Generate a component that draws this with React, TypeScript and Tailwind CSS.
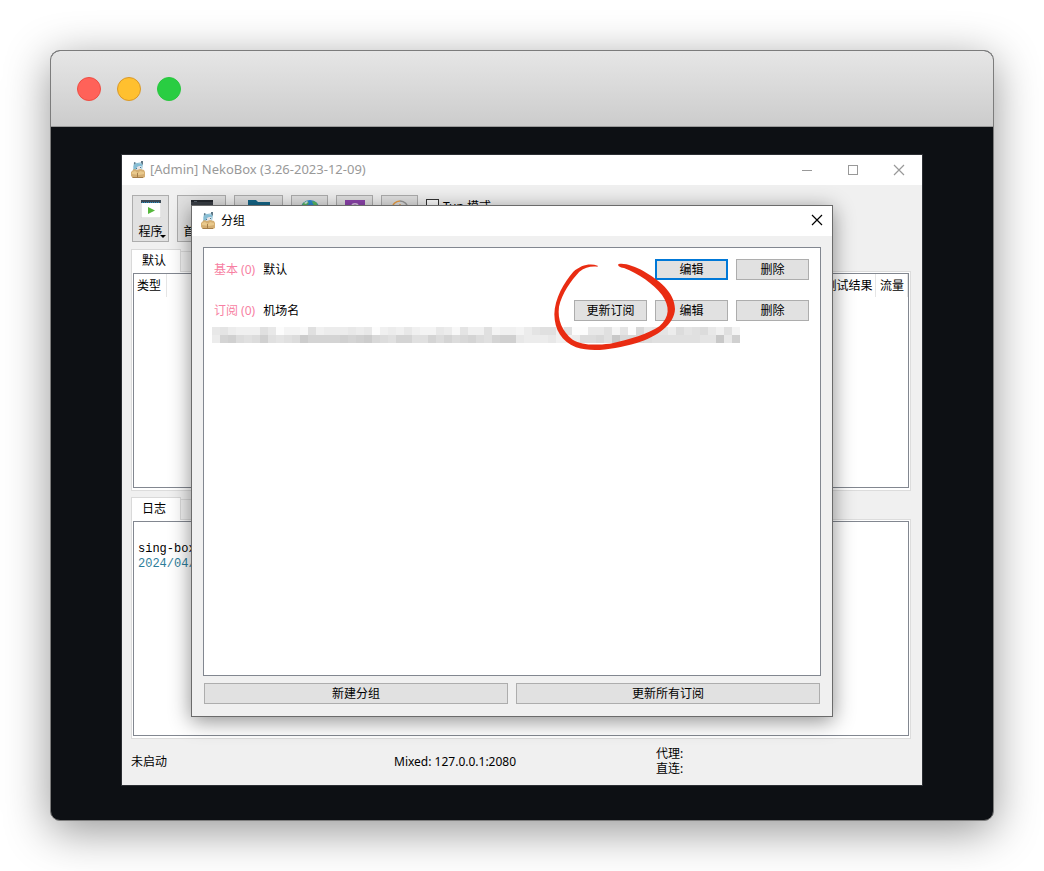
import type { ReactNode } from "react";
import clsx from "clsx";

const uiFont = "font-['Noto_Sans','Noto_Sans_CJK_SC',sans-serif]";

// One hex digit per block, from mid grey (0) to almost white (f)
const maskedUrl = [
  "a9bccc8afdde8cbbbabafcbcacddabe9cc8dccdb988c8ffaa8d9f6a99b7987ac8d",
  "b5478748987355554543678558857576578544abbbaccb776826667888888992a4",
];

const NekoIcon = () => (
  <svg width="16" height="18" viewBox="0 0 16 18" aria-hidden="true">
    <path d="M4 1l3 1 4-1 2 0 0 4-1 4H5L3 6z" fill="#b4d6e4" />
    <path d="M4 1l2 1-2 2zM11 0h2v4l-2-2z" fill="#5f7786" />
    <path d="M6 5h5v4H6z" fill="#e4e2e4" />
    <path d="M4 4l3-2 5 1v2L9 5 7 6 6 9H3z" fill="#86bdd4" />
    <path d="M6 7h1v1H6zM10 6h1v1h-1z" fill="#46748f" />
    <path d="M1 11l3-3 3 1 3-1 4 1 1 2v5l-2 1H3l-2-2z" fill="#d4ae72" />
    <path d="M2 11l3-1 3 2 2-2 4 1v2l-5 1-7-1z" fill="#e9c98c" />
    <path d="M2 16l5 0 6 0v1H3zM7 12h1v4H7z" fill="#a37c49" />
  </svg>
);

const ProgramIcon = () => (
  <svg width="20" height="18" viewBox="0 0 20 18" aria-hidden="true">
    <path d="M0 0h20v18H0z" fill="#fff" stroke="#ccc" />
    <path d="M0 0h20v3H0z" fill="#3d4a56" />
    <path d="M1 2.500h18" stroke="#2c8fc4" strokeDasharray="1 1" />
    <path d="M7 7l7 3.500L7 14z" fill="#56b83c" />
  </svg>
);

const PreferencesIcon = () => (
  <svg width="22" height="22" viewBox="0 0 22 22" aria-hidden="true">
    <path d="M0 0h22v22H0z" fill="#3a3f46" />
    <path d="M0 0h22v2H0z" fill="#25292f" />
    <path d="M3 1.500h3" stroke="#58616b" />
  </svg>
);

const FolderIcon = () => (
  <svg width="22" height="20" viewBox="0 0 22 20" aria-hidden="true">
    <path d="M0 0h8l2 2h12v18H0z" fill="#16688a" />
    <path d="M2 5h20v15H2z" fill="#2286a8" />
  </svg>
);

const GlobeIcon = () => (
  <svg width="20" height="20" viewBox="0 0 20 20" aria-hidden="true">
    <circle cx="10" cy="10" r="10" fill="#2d8bd2" />
    <path d="M3 3l4-2 2 2-2 2-4 2-2 2zM12 1l4 1 3 5-4-1-2-2z" fill="#5dbb63" />
    <path d="M4 3l3-2 1 1-2 2z" fill="#d5eef0" />
  </svg>
);

const UpdateIcon = () => (
  <svg width="20" height="20" viewBox="0 0 20 20" aria-hidden="true">
    <path d="M0 0h20v20H0z" fill="#8e44ad" />
    <path d="M7 6c0-3 6-3 6 0s-3 2-3 5" fill="none" stroke="#dcc4e6" strokeWidth="1.500" />
  </svg>
);

const GaugeIcon = () => (
  <svg width="18" height="18" viewBox="0 0 18 18" aria-hidden="true">
    <path d="M1 9a8 8 0 0 1 8-8" fill="none" stroke="#eda045" strokeWidth="1.500" />
    <path d="M9 1a8 8 0 1 1-8 8" fill="none" stroke="#999" strokeWidth="1.500" />
    <path d="M8 4h2v6H8z" fill="#e0b27c" />
  </svg>
);

const CloseIcon = () => (
  <svg width="12" height="12" viewBox="0 0 12 12" aria-hidden="true">
    <path d="M1 1l10 10M11 1L1 11" fill="none" stroke="currentColor" strokeWidth="1.200" />
  </svg>
);

const MarkerCircle = () => (
  <svg
    className="pointer-events-none absolute -left-[22px] -top-10 z-10 max-w-none"
    width="126"
    height="94"
    viewBox="36 45 378 282"
    aria-hidden="true"
  >
    <path
      d="M173 62C150 53 122 60 100 80C72 112 44 160 43 208C44 255 64 288 108 307C160 324 225 312 290 294C350 276 404 238 405 192C404 140 355 104 310 78C285 65 250 52 235 58C232 62 240 68 252 69C295 86 340 116 366 150C390 185 390 215 358 244C325 266 270 284 210 296C160 301 125 300 98 284C66 258 52 225 57 185C66 145 92 108 118 80C136 66 152 63 173 65Z"
      fill="#e92c12"
    />
  </svg>
);

interface ButtonProps {
  children: ReactNode;
  className?: string;
  focused?: boolean;
}

const PushButton = ({ children, className, focused }: ButtonProps) => (
  <button
    type="button"
    className={clsx(
      "flex h-[21px] items-center justify-center bg-[#e1e1e1] leading-4 text-black",
      focused ? "border-2 border-[#0078d7]" : "border border-[#adadad]",
      className
    )}
  >
    {children}
  </button>
);

const toolbar = [
  { name: "程序", icon: ProgramIcon, label: "程序", wide: false },
  { name: "首选项", icon: PreferencesIcon, label: "首选项", wide: true },
  { name: "服务器", icon: FolderIcon, wide: true },
  { name: "浏览器", icon: GlobeIcon, wide: false },
  { name: "更新", icon: UpdateIcon, wide: false },
  { name: "流量", icon: GaugeIcon, wide: false },
];

const Toolbar = () => (
  <div className="flex items-start gap-2 pl-[1px]">
    {toolbar.map((item) => (
      <button
        key={item.name}
        type="button"
        aria-label={item.name}
        className={clsx(
          "relative flex h-[47px] flex-col items-center justify-between border border-[#adadad] bg-[#e1e1e1] pb-[1px] pt-1",
          item.wide ? "w-[49px]" : "w-[37px]"
        )}
      >
        <item.icon />
        {item.label && <span className="leading-4">{item.label}</span>}
        {item.name === "程序" && (
          <span className="absolute bottom-[3px] right-[2px] border-x-[3px] border-t-[3px] border-x-transparent border-t-black" />
        )}
      </button>
    ))}
    <label className="mt-1 flex items-start gap-1 leading-[15px]">
      <input
        type="checkbox"
        className="size-[13px] appearance-none border border-[#333] bg-white"
      />
      <span>Tun 模式</span>
    </label>
  </div>
);

interface TabPaneProps {
  label: string;
  nextLabel: string;
  children: ReactNode;
}

const TabPane = ({ label, nextLabel, children }: TabPaneProps) => (
  <section className="flex flex-1 flex-col">
    <div role="tablist" className="flex h-[22px] items-end">
      <button
        type="button"
        role="tab"
        aria-selected="true"
        className="relative z-[1] -mb-[1px] h-[23px] w-[50px] border border-b-0 border-[#d9d9d9] bg-white pr-1"
      >
        {label}
      </button>
      <button
        type="button"
        role="tab"
        aria-selected="false"
        aria-label={nextLabel}
        className="h-5 w-[49px] border border-b-0 border-l-0 border-[#d9d9d9] bg-[#f0f0f0]"
      />
    </div>
    <div className="flex flex-1 border border-[#dcdcdc] bg-white p-[1px] pb-[2px]">
      <div className="flex-1 border border-[#828790] bg-white">{children}</div>
    </div>
  </section>
);

const groups = [
  { kind: "基本 (0)", name: "默认", subscription: false },
  { kind: "订阅 (0)", name: "机场名", subscription: true },
];

const GroupDialog = () => (
  <div
    role="dialog"
    aria-label="分组"
    className="absolute bottom-[68px] left-[69px] right-[89px] top-[50px] z-10 flex flex-col border border-[#6b6b6b] bg-[#f0f0f0] shadow-[0_4px_20px_rgba(0,0,0,0.45)]"
  >
    <header className="flex h-[30px] shrink-0 items-center bg-white pl-2">
      <NekoIcon />
      <h2 className="ml-[5px] flex-1">分组</h2>
      <button type="button" aria-label="关闭" className="flex h-full w-[31px] items-center justify-center pb-[2px]">
        <CloseIcon />
      </button>
    </header>
    <div className="flex flex-1 flex-col px-[11px] pb-3 pt-[11px]">
      <ul className="flex flex-1 flex-col gap-5 border border-[#828790] bg-white pl-2 pr-[11px] pt-[11px]">
        {groups.map((group) => (
          <li key={group.name}>
            <div className="flex items-center gap-2">
              <div className="flex flex-1 gap-2 pl-[2px]">
                <span className="text-[#f77fa3]">{group.kind}</span>
                <span>{group.name}</span>
              </div>
              {group.subscription && (
                <div className="relative">
                  <PushButton className="w-[73px]">更新订阅</PushButton>
                  <MarkerCircle />
                </div>
              )}
              <PushButton className="w-[73px]" focused={!group.subscription}>
                编辑
              </PushButton>
              <PushButton className="w-[73px]">删除</PushButton>
            </div>
            {group.subscription && (
              <div className="mt-[6px]">
                {maskedUrl.map((row) => (
                  <div key={row} className="flex">
                    {row.split("").map((digit, index) => {
                      const shade = 192 + parseInt(digit, 16) * 4;
                      return (
                        <span
                          key={index}
                          className="size-2"
                          style={{ backgroundColor: `rgb(${shade}, ${shade}, ${shade})` }}
                        />
                      );
                    })}
                  </div>
                ))}
              </div>
            )}
          </li>
        ))}
      </ul>
      <div className="mt-[7px] flex gap-2 px-[1px]">
        <PushButton className="flex-1">新建分组</PushButton>
        <PushButton className="flex-1">更新所有订阅</PushButton>
      </div>
    </div>
  </div>
);

const MainWindow = () => (
  <main className="relative flex flex-1 flex-col border border-[#2b2e33] bg-[#f0f0f0]">
    {/* Title bar */}
    <header className="flex h-[30px] shrink-0 items-center bg-white pl-2 text-[#999]">
      <NekoIcon />
      <h1 className="ml-1 flex-1 text-[13px]">[Admin] NekoBox (3.26-2023-12-09)</h1>
      <button type="button" aria-label="最小化" className="flex h-full w-[46px] items-center justify-center">
        <span className="h-[1px] w-[10px] bg-[#999]" />
      </button>
      <button type="button" aria-label="最大化" className="flex h-full w-[46px] items-center justify-center">
        <span className="size-[10px] border border-[#999]" />
      </button>
      <button type="button" aria-label="关闭" className="flex h-full w-[46px] items-center justify-center">
        <CloseIcon />
      </button>
    </header>

    <div className="flex flex-1 flex-col pl-[9px] pr-[11px] pt-[10px]">
      <Toolbar />
      <div className="mt-[7px] flex flex-1 flex-col gap-[6px]">
        <TabPane label="默认" nextLabel="机场名">
          <table className="w-full table-fixed">
            <thead>
              <tr className="h-[23px] text-left">
                <th className="w-8 border-r border-[#e5e5e5] pl-[3px] font-normal">类型</th>
                <th />
                <th className="w-[51px] border-r border-[#e5e5e5] font-normal">测试结果</th>
                <th className="w-8 border-r border-[#e5e5e5] pl-1 font-normal">流量</th>
              </tr>
            </thead>
          </table>
        </TabPane>
        <TabPane label="日志" nextLabel="连接">
          <div className="px-1 pt-5 font-['Liberation_Mono',monospace] leading-[15px]">
            <p>sing-box</p>
            <p className="text-[#2d7d9a]">2024/04/</p>
          </div>
        </TabPane>
      </div>
    </div>

    {/* Status bar */}
    <footer className="grid h-[46px] shrink-0 grid-cols-3 items-center pb-[2px] pl-[9px] pr-[5px] leading-[15px]">
      <p>未启动</p>
      <p className="pl-[1px]">Mixed: 127.0.0.1:2080</p>
      <div className="pl-[1px]">
        <p>代理:</p>
        <p>直连:</p>
      </div>
    </footer>

    <GroupDialog />
  </main>
);

const App = () => {
  return (
    <div className={clsx("flex min-h-screen bg-white p-[50px] text-xs text-black", uiFont)}>
      <div className="flex flex-1 flex-col overflow-hidden rounded-[10px] border border-[#7c7c7c] bg-[#0d1014] shadow-[0_10px_45px_rgba(0,0,0,0.42)]">
        <div className="flex h-[76px] shrink-0 items-center gap-4 border-b border-[#9a9a9a] bg-linear-to-b from-[#e6e6e6] to-[#cccccc] pl-[26px]">
          <span className="size-6 rounded-full border border-[#ee4d43] bg-[#ff6259]" />
          <span className="size-6 rounded-full border border-[#d9982a] bg-[#ffc02f]" />
          <span className="size-6 rounded-full border border-[#28c73e] bg-[#29cd42]" />
        </div>
        <div className="flex flex-1 px-[70px] pb-[34px] pt-[27px]">
          <MainWindow />
        </div>
      </div>
    </div>
  );
};

export default App;
